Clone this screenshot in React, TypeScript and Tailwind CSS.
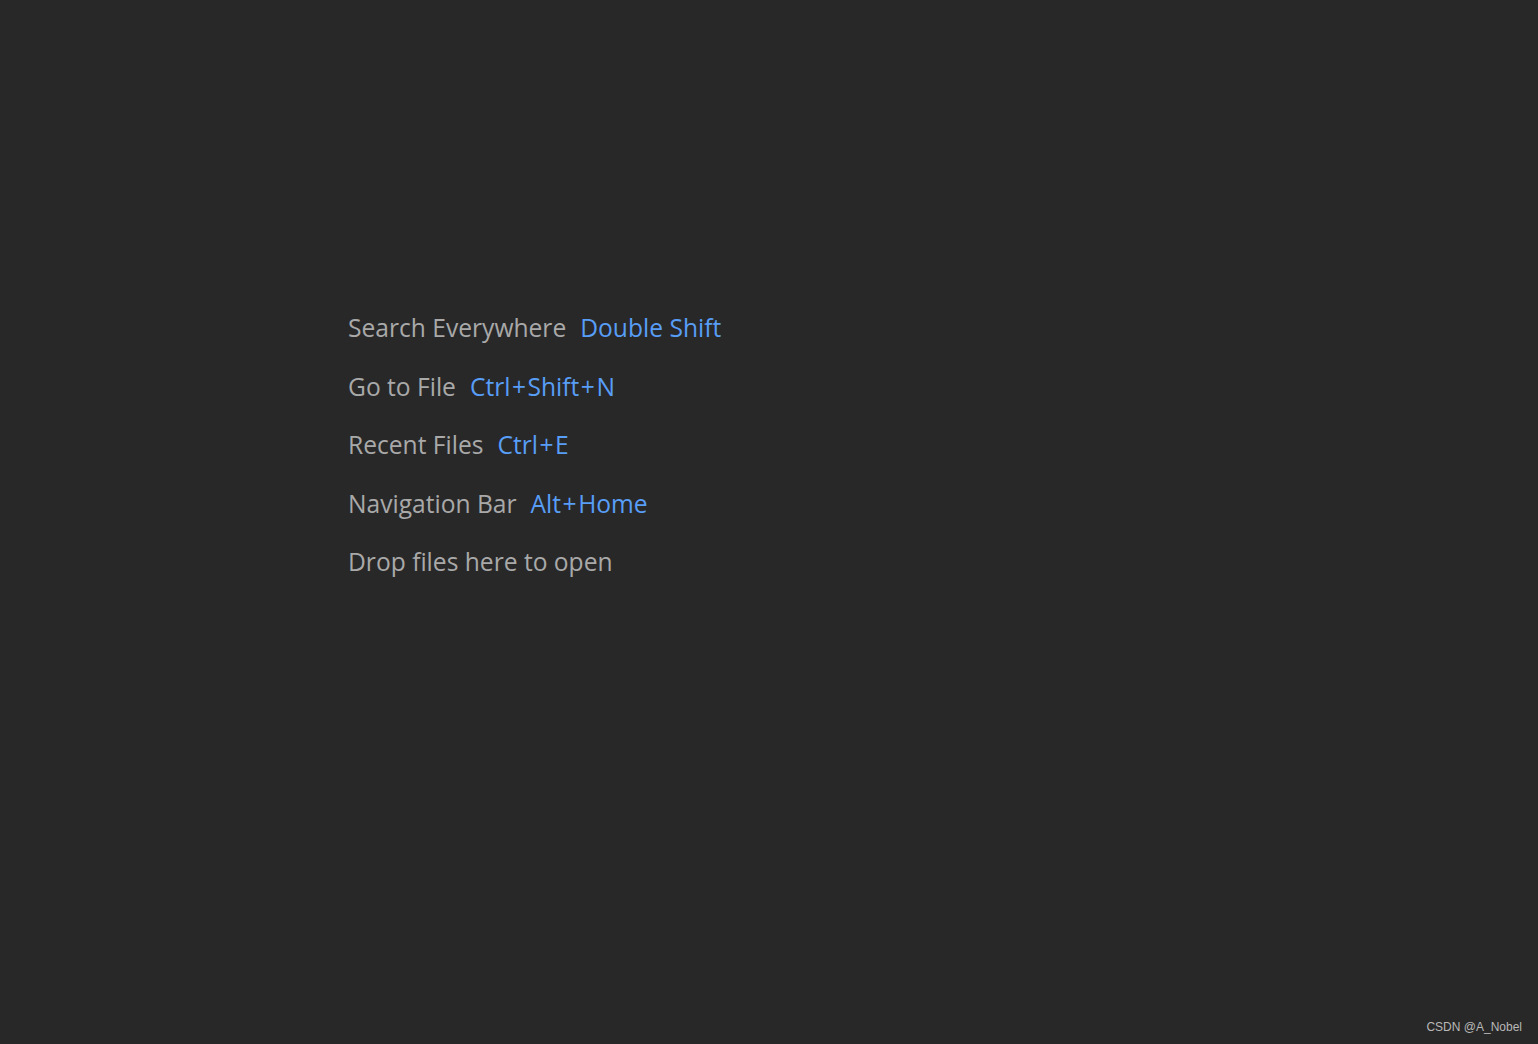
const rows: { label: string; shortcut?: string }[] = [
  { label: "Search Everywhere", shortcut: "Double Shift" },
  { label: "Go to File", shortcut: "Ctrl+Shift+N" },
  { label: "Recent Files", shortcut: "Ctrl+E" },
  { label: "Navigation Bar", shortcut: "Alt+Home" },
  { label: "Drop files here to open" },
];

function Shortcut({ keys }: { keys: string }) {
  const parts = keys.split("+");
  return (
    <span className="text-[#589df6]">
      {parts.map((p, i) => (
        <span key={i}>
          {i > 0 && <span className="px-[1.5px]">+</span>}
          {p}
        </span>
      ))}
    </span>
  );
}

export default function App() {
  return (
    <div className="relative flex h-[1044px] w-full flex-col bg-[#282828] pl-[348px] pt-[310px] font-['Open_Sans',sans-serif]">
      <div className="flex flex-col">
        {rows.map((row) => (
          <div key={row.label} className="flex h-[58.5px] items-start gap-[14px] text-[24.6px] leading-[36px]">
            <span className="text-[#a9a9a9]">{row.label}</span>
            {row.shortcut && <Shortcut keys={row.shortcut} />}
          </div>
        ))}
      </div>
      <div className="absolute bottom-[8px] right-[16px] font-['Liberation_Sans',sans-serif] text-[12px] text-[#b8b8b8]">
        CSDN @A_Nobel
      </div>
    </div>
  );
}
